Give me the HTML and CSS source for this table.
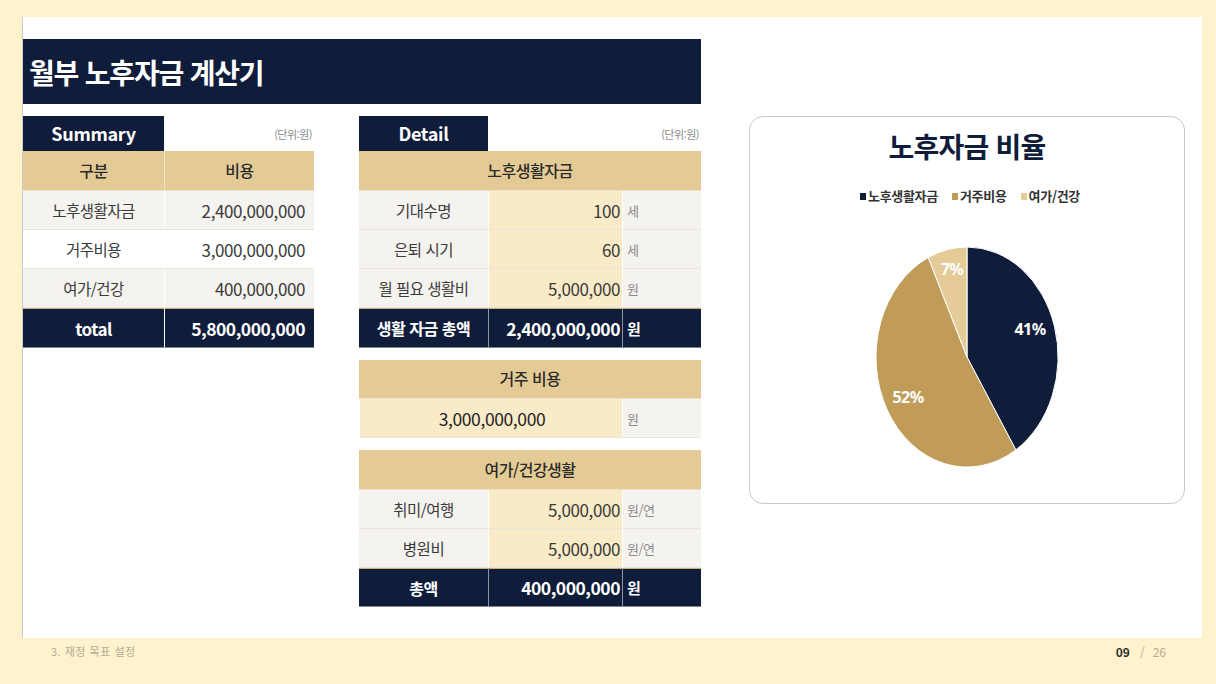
FILE: index.html
```html
<!DOCTYPE html>
<html lang="ko">
<head>
<meta charset="utf-8">
<link rel="stylesheet" href="styles.css">
</head>
<body>
<div class="page">
  <div class="slide">
    <div class="title-bar"><h1>월부 노후자금 계산기</h1></div>
    <div class="content">
      <div class="summary">
        <div class="tab-row">
          <div class="tab tab-sum">Summary</div>
          <div class="unit-note">(단위:원)</div>
        </div>
        <div class="grid sum-grid">
          <div class="c hd">구분</div><div class="c hd">비용</div>
          <div class="c lbl g">노후생활자금</div><div class="c num g">2,400,000,000</div>
          <div class="c lbl w">거주비용</div><div class="c num w">3,000,000,000</div>
          <div class="c lbl g">여가/건강</div><div class="c num g">400,000,000</div>
          <div class="c tot big">total</div><div class="c tot totnum">5,800,000,000</div>
        </div>
      </div>

      <div class="detail">
        <div class="tab-row">
          <div class="tab tab-det">Detail</div>
          <div class="unit-note">(단위:원)</div>
        </div>
        <div class="grid det-grid">
          <div class="c hd span3">노후생활자금</div>
          <div class="c lbl g">기대수명</div><div class="c num cream">100</div><div class="c unit g">세</div>
          <div class="c lbl g">은퇴 시기</div><div class="c num cream">60</div><div class="c unit g">세</div>
          <div class="c lbl g">월 필요 생활비</div><div class="c num cream">5,000,000</div><div class="c unit g">원</div>
          <div class="c tot">생활 자금 총액</div><div class="c tot totnum">2,400,000,000</div><div class="c tot totunit">원</div>
        </div>

        <div class="grid det-grid block">
          <div class="c hd span3">거주 비용</div>
          <div class="c num cream span2 center">3,000,000,000</div><div class="c unit g">원</div>
        </div>

        <div class="grid det-grid block">
          <div class="c hd span3">여가/건강생활</div>
          <div class="c lbl g">취미/여행</div><div class="c num cream">5,000,000</div><div class="c unit g">원/연</div>
          <div class="c lbl g">병원비</div><div class="c num cream">5,000,000</div><div class="c unit g">원/연</div>
          <div class="c tot">총액</div><div class="c tot totnum">400,000,000</div><div class="c tot totunit">원</div>
        </div>
      </div>

      <div class="chart">
        <h2>노후자금 비율</h2>
        <div class="legend">
          <span class="li"><i class="sq navy"></i>노후생활자금</span>
          <span class="li"><i class="sq gold"></i>거주비용</span>
          <span class="li"><i class="sq light"></i>여가/건강</span>
        </div>
        <svg class="pie" width="433" height="270" viewBox="0 0 433 270">
          <path d="M216,152 L216,42 A91,110 0 0 1 264.8,244.9 Z" fill="#0f1d3b" stroke="#fff" stroke-width="1"/>
          <path d="M216,152 L264.8,244.9 A91,110 0 1 1 177.3,52.5 Z" fill="#c19c58" stroke="#fff" stroke-width="1"/>
          <path d="M216,152 L177.3,52.5 A91,110 0 0 1 216,42 Z" fill="#e4cb98" stroke="#fff" stroke-width="1"/>
          <text x="279" y="124" class="pl">41%</text>
          <text x="157" y="192" class="pl">52%</text>
          <text x="201" y="64" class="pl">7%</text>
        </svg>
      </div>
    </div>
  </div>
  <div class="footer">
    <span class="section">3. 재정 목표 설정</span>
    <span class="pager"><b>09</b><span class="sl">/</span>26</span>
  </div>
</div>
</body>
</html>
```

FILE: styles.css
```css
* { box-sizing: border-box; }
html, body { margin: 0; padding: 0; }
body {
  background: #fff2cd;
  font-family: "Noto Sans CJK KR", "Noto Sans", sans-serif;
  color: #333;
  width: 1216px;
  height: 684px;
  overflow: hidden;
}
.page { padding-top: 17px; }
.slide {
  margin-left: 22px;
  width: 1180px;
  height: 621px;
  background: #fff;
  border-left: 1px solid #c9c9cf;
  padding-top: 22px;
}
.title-bar {
  width: 678px;
  height: 65px;
  background: #0f1d3b;
  display: flex;
  align-items: center;
  padding-left: 6px;
}
.title-bar h1 {
  margin: 0;
  color: #fff;
  font-size: 28px;
  font-weight: 700;
  letter-spacing: -1.2px;
  line-height: 1;
}
.content {
  display: flex;
  margin-top: 12px;
}
.summary { width: 291px; }
.detail { width: 342px; margin-left: 45px; }
.tab-row {
  display: flex;
  align-items: center;
  justify-content: space-between;
  height: 35px;
}
.tab {
  height: 35px;
  background: #0f1d3b;
  color: #fff;
  font-size: 18px;
  font-weight: 700;
  display: flex;
  align-items: center;
  justify-content: center;
  letter-spacing: -0.3px;
  padding-bottom: 2px;
}
.tab-sum { width: 141px; }
.tab-det { width: 129px; }
.unit-note {
  font-size: 11px;
  color: #8a8a8a;
  padding-right: 2px;
  letter-spacing: -0.5px;
}
.grid { display: grid; gap: 0; }
.sum-grid { grid-template-columns: 141px 150px; }
.det-grid { grid-template-columns: 129px 134px 79px; }
.block { margin-top: 12px; }
.c {
  display: flex;
  align-items: center;
  justify-content: center;
  border-bottom: 1px solid #e9e5dc;
  font-size: 16px;
  letter-spacing: -0.5px;
  white-space: nowrap;
}
.sum-grid .c:nth-child(2n) { border-left: 1px solid #ffffff; }
.num, .unit { border-left: 1px solid #ffffff; }
.hd {
  background: #e4cb96;
  color: #2b2b2b;
  font-size: 16px;
  font-weight: 500;
  border-bottom: 1px solid #efe3c6;
  padding-bottom: 2px;
}
.sum-grid .hd + .hd { border-left: 1px solid #efe3c6; }
.span3 { grid-column: span 3; }
.span2 { grid-column: span 2; }
.lbl { color: #3a3a3a; font-size: 15.5px; }
.g { background: #f5f3ef; }
.w { background: #ffffff; }
.cream { background: #faebc8; }
.num {
  justify-content: flex-end;
  padding-right: 9px;
  font-size: 17px;
  letter-spacing: -0.4px;
  color: #3a3a3a;
}
.det-grid .num { padding-right: 2px; }
.num.center { justify-content: center; padding-right: 0; padding-left: 2px; font-size: 17.5px; color: #222; }
.unit {
  justify-content: flex-start;
  padding-left: 4px;
  font-size: 13px;
  color: #8a8a8a;
}
.tot {
  background: #0f1d3b;
  color: #fff;
  font-weight: 700;
  font-size: 16px;
  border-top: 1px solid #c8b07a;
  border-bottom: 1px solid #7d8699;
}
.tot.big { font-size: 17px; }
.totnum {
  justify-content: flex-end;
  padding-right: 9px;
  font-size: 17.5px;
  border-left: 1px solid #8b93a5;
}
.det-grid .totnum { padding-right: 2px; }
.totunit {
  justify-content: flex-start;
  padding-left: 4px;
  font-size: 15px;
  border-left: 1px solid #8b93a5;
}
.sum-grid, .det-grid { grid-template-rows: 40px 39px 39px 39px 40px; }
.block.det-grid { grid-template-rows: 39px 39px; }
.block.det-grid:last-child { grid-template-rows: 40px 39px 39px 39px; }

.chart {
  margin-left: 48px;
  width: 436px;
  height: 388px;
  border: 1.5px solid #c8c8c8;
  border-radius: 14px;
  padding-top: 9px;
  display: flex;
  flex-direction: column;
  align-items: center;
}
.chart h2 {
  margin: 0;
  font-size: 28px;
  font-weight: 700;
  color: #0f1d3b;
  line-height: 40px;
  letter-spacing: -0.8px;
}
.legend {
  margin-top: 21px;
  display: flex;
  gap: 14px;
  font-size: 13px;
  font-weight: 700;
  color: #333;
  line-height: 18px;
  letter-spacing: -0.3px;
  padding-left: 6px;
}
.li { display: flex; align-items: center; }
.sq { display: inline-block; width: 6px; height: 7px; margin-right: 2px; }
.sq.navy { background: #0f1d3b; }
.sq.gold { background: #c19c58; }
.sq.light { background: #e4cb98; }
.pie { display: block; margin-top: 0; }
.pl {
  fill: #fff;
  font-size: 16px;
  font-weight: 700;
  text-anchor: middle;
  dominant-baseline: central;
  font-family: "Noto Sans", sans-serif;
  letter-spacing: -0.5px;
}
.footer {
  display: flex;
  justify-content: space-between;
  align-items: center;
  padding: 6px 50px 0 51px;
  height: 20px;
}
.section { font-size: 11px; color: #b3ab95; letter-spacing: 0.5px; }
.pager { font-size: 12px; color: #b3ab95; }
.pager b { color: #333; font-weight: 700; }
.sl { margin: 0 8px 0 10px; }
```
